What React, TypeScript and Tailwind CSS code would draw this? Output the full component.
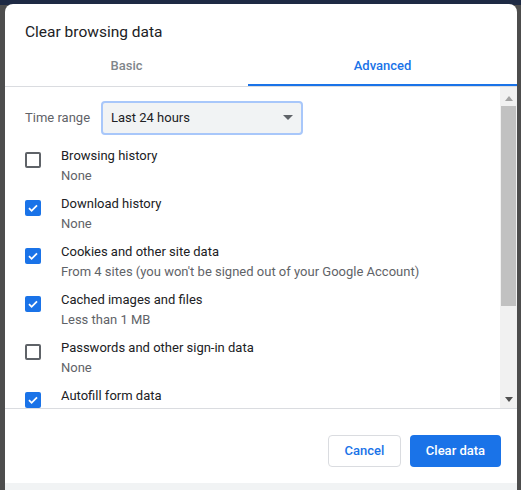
import React from "react";

const items = [
  { t: "Browsing history", s: "None", c: false },
  { t: "Download history", s: "None", c: true },
  { t: "Cookies and other site data", s: "From 4 sites (you won't be signed out of your Google Account)", c: true },
  { t: "Cached images and files", s: "Less than 1 MB", c: true },
  { t: "Passwords and other sign-in data", s: "None", c: false },
  { t: "Autofill form data", s: "", c: true },
];

function Box({ c }: { c: boolean }) {
  return c ? (
    <div className="w-[16px] h-[16px] rounded-[2px] bg-[#1a73e8] flex items-center justify-center shrink-0">
      <svg width="12" height="12" viewBox="0 0 12 12"><path d="M2 6.2l2.6 2.6L10 3.4" stroke="white" strokeWidth="1.8" fill="none" /></svg>
    </div>
  ) : (
    <div className="w-[16px] h-[16px] rounded-[2px] border-2 border-[#5f6368] shrink-0" />
  );
}

export default function App() {
  return (
    <div className="w-[521px] h-[490px] bg-[#4d4d4d] relative overflow-hidden" style={{ fontFamily: "Roboto, 'Liberation Sans', sans-serif" }}>
      <div className="absolute top-0 left-0 right-0 h-[5px] bg-[#1e2a44]" />
      <div className="absolute left-[5px] top-[4px] w-[512px] h-[479px] bg-white rounded-t-[8px] flex flex-col">
        <div className="pl-[20px] pt-[17px] text-[15.5px] text-[#202124] h-[44px]">Clear browsing data</div>
        <div className="flex h-[39px] border-b border-[#dadce0]">
          <div className="w-[243px] flex items-center justify-center text-[13px] font-medium text-[#80868b] pb-[2px]">Basic</div>
          <div className="flex-1 flex items-center justify-center text-[13px] font-medium text-[#1a73e8] border-b-[2px] border-[#1a73e8]">Advanced</div>
        </div>
        <div className="flex h-[322px] border-b border-[#dadce0]">
          <div className="flex-1 overflow-hidden">
            <div className="flex items-center h-[58px] pt-[3px]">
              <span className="pl-[20px] text-[13px] text-[#5f6368] w-[96px]">Time range</span>
              <div className="w-[202px] h-[34px] rounded-[4px] border-2 border-[#a8c7fa] bg-[#f1f3f4] flex items-center justify-between px-[8px] text-[13px] text-[#202124]">
                <span>Last 24 hours</span>
                <svg width="10" height="5" viewBox="0 0 10 5"><path d="M0 0h10L5 5z" fill="#5f6368" /></svg>
              </div>
            </div>
            {items.map((i) => (
              <div key={i.t} className="flex items-start h-[48px] pl-[20px] pt-[7px]">
                <Box c={i.c} />
                <div className="ml-[20px] -mt-[5px] flex flex-col gap-[3px] text-[13px] leading-[17px]">
                  <span className="text-[#202124]">{i.t}</span>
                  {i.s && <span className="text-[#5f6368]">{i.s}</span>}
                </div>
              </div>
            ))}
          </div>
          <div className="w-[17px] bg-[#f1f1f1] flex flex-col items-center">
            <svg className="mt-[9px]" width="8" height="5" viewBox="0 0 8 5"><path d="M0 5h8L4 0z" fill="#a3a3a3" /></svg>
            <div className="w-[15px] h-[200px] bg-[#c1c1c1] mt-[5px]" />
            <div className="flex-1" />
            <svg className="mb-[6px]" width="8" height="5" viewBox="0 0 8 5"><path d="M0 0h8L4 5z" fill="#505050" /></svg>
          </div>
        </div>
        <div className="flex justify-end gap-[9px] pr-[16px] pt-[26px]">
          <button className="w-[73px] h-[32px] rounded-[4px] border border-[#dadce0] text-[13px] font-medium text-[#1a73e8] bg-white">Cancel</button>
          <button className="w-[91px] h-[32px] rounded-[4px] bg-[#1a73e8] text-[13px] font-medium text-white">Clear data</button>
        </div>
      </div>
      <div className="absolute left-[5px] top-[483px] w-[512px] h-[7px] bg-[#f1f3f4]" />
    </div>
  );
}
